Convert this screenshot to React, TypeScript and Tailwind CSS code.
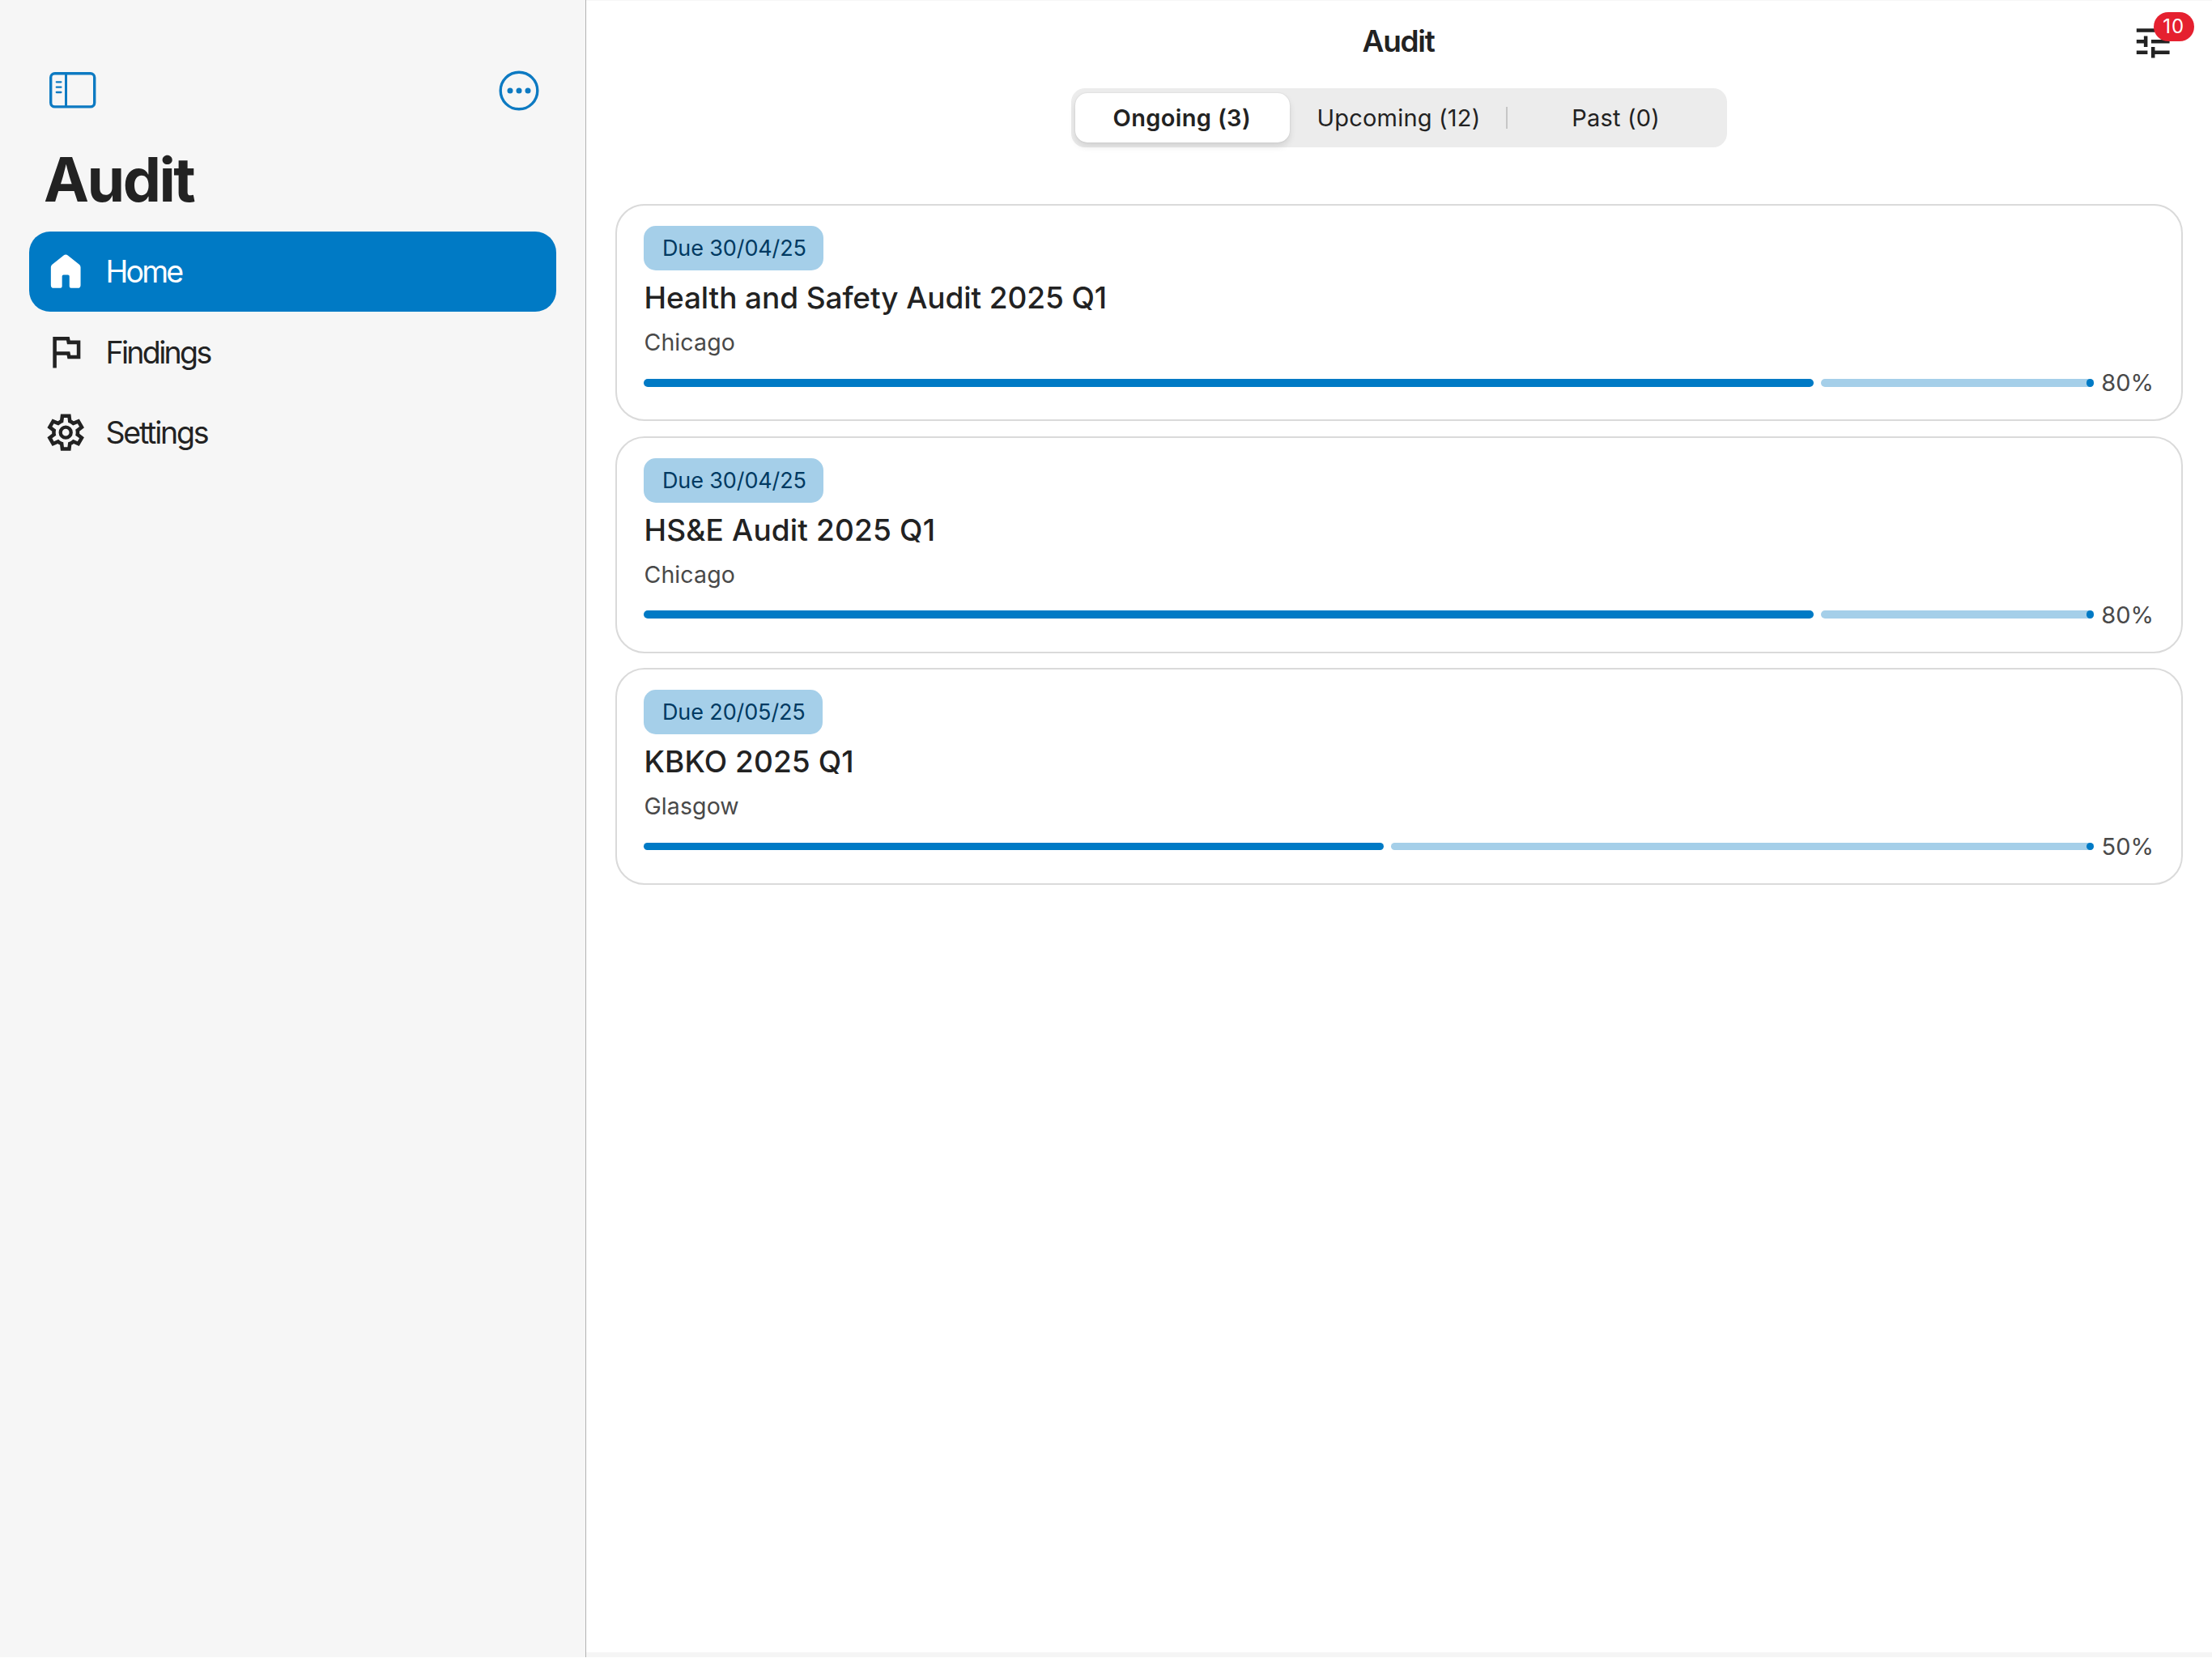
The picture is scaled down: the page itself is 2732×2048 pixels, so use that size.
import React from 'react';

function SidebarToggleIcon() {
  return (
    <svg className="h-[46px] w-[60px]" viewBox="0 0 60 46" fill="none" stroke="currentColor">
      <rect x="1.7" y="1.7" width="54" height="41.2" rx="5" strokeWidth="3.4" />
      <path d="M20.5 2v40.6" strokeWidth="3" />
      <path d="M8.8 12.3h5.6M8.8 18.7h5.6M8.8 25h5.6" strokeWidth="2.3" strokeLinecap="round" />
    </svg>
  );
}

function MoreIcon() {
  return (
    <svg className="size-[50px]" viewBox="0 0 50 50" fill="none">
      <circle cx="25" cy="25" r="22.8" stroke="currentColor" strokeWidth="3.4" />
      <g fill="currentColor">
        <circle cx="14" cy="25" r="3.5" />
        <circle cx="25" cy="25" r="3.5" />
        <circle cx="36" cy="25" r="3.5" />
      </g>
    </svg>
  );
}

function HomeIcon() {
  return (
    <svg className="size-[54.4px] shrink-0" viewBox="0 0 24 24" fill="currentColor">
      <path d="M12 2.9c.42 0 .82.15 1.15.41l6.1 4.9c.55.43.85 1 .85 1.65v9.64a1.6 1.6 0 0 1-1.6 1.6h-3.6a.9.9 0 0 1-.9-.9v-5.5a.8.8 0 0 0-.8-.8h-2.4a.8.8 0 0 0-.8.8v5.5a.9.9 0 0 1-.9.9H5.5a1.6 1.6 0 0 1-1.6-1.6V9.86c0-.65.3-1.22.85-1.65l6.1-4.9c.33-.26.73-.41 1.15-.41z" />
    </svg>
  );
}

function FlagIcon() {
  return (
    <svg className="size-[54.4px] shrink-0" viewBox="0 0 24 24" fill="currentColor">
      <path d="M12.36 6l.4 2H18v6h-3.36l-.4-2H7V6h5.36M14 4H5v17h2v-7h5.6l.4 2h7V6h-5.6L14 4z" />
    </svg>
  );
}

function GearIcon() {
  return (
    <svg className="size-[54.4px] shrink-0" viewBox="0 -960 960 960" fill="currentColor">
      <path
        fillRule="evenodd"
        d="m370-80-16-128q-13-5-24.5-12T307-235l-119 50L78-375l103-78q-1-7-1-13.5v-27q0-6.5 1-13.5L78-585l110-190 119 50q11-8 23-15t24-12l16-128h220l16 128q13 5 24.5 12t22.5 15l119-50 110 190-103 78q1 7 1 13.5v27q0 6.5-2 13.5l103 78-110 190-118-50q-11 8-23 15t-24 12L590-80H370Zm70-80h79l14-106q31-8 57.5-23.5T639-327l99 41 39-68-86-65q5-14 7-29.5t2-31.5q0-16-2-31.5t-7-29.5l86-65-39-68-99 42q-22-23-48.5-38.5T533-694l-13-106h-79l-14 106q-31 8-57.5 23.5T321-633l-99-41-39 68 86 64q-5 15-7 30t-2 32q0 16 2 31t7 30l-86 65 39 68 99-42q22 23 48.5 38.5T427-266l13 106Z"
      />
      <circle cx="480" cy="-480" r="115" fill="none" stroke="currentColor" strokeWidth="76" />
    </svg>
  );
}

function TuneIcon() {
  return (
    <svg className="size-[54.4px]" viewBox="0 0 24 24" fill="currentColor">
      <path d="M3 17v2h6v-2H3zM3 5v2h10V5H3zm10 16v-2h8v-2h-8v-2h-2v6h2zM7 9v2H3v2h4v2h2V9H7zm14 4v-2H11v2h10zm-6-4h2V7h4V5h-4V3h-2v6z" />
    </svg>
  );
}

const navItems = [
  { label: 'Home', Icon: HomeIcon, row: 'rounded-[26px] bg-[#007ac5] text-white', text: 'tracking-[-2.8px]' },
  { label: 'Findings', Icon: FlagIcon, row: 'text-[#222]', text: 'tracking-[-2.65px]' },
  { label: 'Settings', Icon: GearIcon, row: 'text-[#222]', text: 'tracking-[-2.2px]' },
];

const audits = [
  { due: 'Due 30/04/25', title: 'Health and Safety Audit 2025 Q1', site: 'Chicago', percent: '80%', bar: 'w-[1445px]', tracking: 'tracking-[-0.1px]' },
  { due: 'Due 30/04/25', title: 'HS&E Audit 2025 Q1', site: 'Chicago', percent: '80%', bar: 'w-[1445px]', tracking: 'tracking-[0.15px]' },
  { due: 'Due 20/05/25', title: 'KBKO 2025 Q1', site: 'Glasgow', percent: '50%', bar: 'w-[914px]', tracking: 'tracking-[0.1px]' },
];

function Sidebar() {
  return (
    <aside className="w-[724px] shrink-0 border-r border-[#b2b2b2] bg-[#f6f6f6] pt-[87px]">
      <div className="flex h-[50px] items-center justify-between pr-[57px] pl-[61px] text-[#0d7ac2]">
        <SidebarToggleIcon />
        <MoreIcon />
      </div>
      <h1 className="mt-[40px] pl-[54px] text-[75px] leading-[90px] font-bold tracking-[-2.5px] text-[#222]">Audit</h1>
      <nav className="mt-[18.6px] px-9">
        {navItems.map(({ label, Icon, row, text }) => (
          <a key={label} className={`flex h-[99.4px] items-center gap-[22px] pl-[18px] ${row}`}>
            <Icon />
            <span className={`pt-[2px] text-[37.5px] leading-[46px] ${text}`}>{label}</span>
          </a>
        ))}
      </nav>
    </aside>
  );
}

function Tabs() {
  return (
    <div className="mx-auto mt-2 grid h-[73px] w-[810px] grid-cols-3 items-center rounded-[17px] bg-[#ececec] px-[5px] text-[29px] leading-none tracking-[0.2px]">
      <div className="mr-[2px] flex h-[61.5px] items-center justify-center rounded-[15px] bg-white pr-px font-semibold tracking-[0.35px] shadow-[0_5px_8px_rgba(0,0,0,0.11),0_0_2px_rgba(0,0,0,0.12)]">
        Ongoing (3)
      </div>
      <div className="-mr-px flex h-[27px] items-center justify-center border-r-2 border-[#c6c6c6]">Upcoming (12)</div>
      <div className="flex items-center justify-center pl-[2px]">Past (0)</div>
    </div>
  );
}

function AuditCard({ due, title, site, percent, bar, tracking }: (typeof audits)[number]) {
  return (
    <article className="h-[268px] rounded-[36px] border-2 border-[#dadada] px-[33px] pt-[25px]">
      <div className="flex h-[55px] w-fit items-center rounded-[15px] bg-[#a5cfe9] pr-[21px] pl-[23px] text-[27px] leading-none tracking-[-0.12px] text-[#003a62]">
        {due}
      </div>
      <h2 className={`mt-[11px] pl-[0.5px] text-[37px] leading-[45px] font-medium ${tracking}`}>{title}</h2>
      <p className="mt-[15px] pl-[0.5px] text-[28.5px] leading-[35px] tracking-[0.1px] text-[#494949]">{site}</p>
      <div className="mt-[15px] flex items-center gap-[9px]">
        <div className={`h-[9.5px] shrink-0 rounded-full bg-[#007ac5] ${bar}`} />
        <div className="flex h-[9.5px] grow justify-end rounded-full bg-[#a5cfe9]">
          <div className="size-[9.5px] rounded-full bg-[#007ac5]" />
        </div>
        <div className="w-[66px] pr-px text-right text-[29px] leading-[35px] text-[#494949]">{percent}</div>
      </div>
    </article>
  );
}

export default function App() {
  return (
    <div className="flex h-[2048px] w-[2732px] overflow-hidden border-b border-white bg-white font-['Inter','Noto_Sans',sans-serif] text-[#222]">
      <Sidebar />
      <main className="flex grow flex-col border-t border-[#f6f6f6]">
        <header className="grid h-[100px] grid-cols-[1fr_auto_1fr] items-center px-[45px]">
          <span />
          <h2 className="mr-[2px] text-[37px] leading-[46px] font-semibold tracking-[-1.3px]">Audit</h2>
          <button className="relative mr-px justify-self-end">
            <TuneIcon />
            <span className="absolute -top-[9px] left-[28px] flex h-9 w-[50px] items-center justify-center rounded-full bg-[#e5202f] pt-px text-[24px] leading-none tracking-[1px] text-white">
              10
            </span>
          </button>
        </header>
        <Tabs />
        <section className="mt-[70.4px] flex grow flex-col gap-[18.2px] px-9">
          {audits.map((audit, i) => (
            <AuditCard key={i} {...audit} />
          ))}
        </section>
        <footer className="h-1.5 bg-[#f5f5f5]" />
      </main>
    </div>
  );
}
